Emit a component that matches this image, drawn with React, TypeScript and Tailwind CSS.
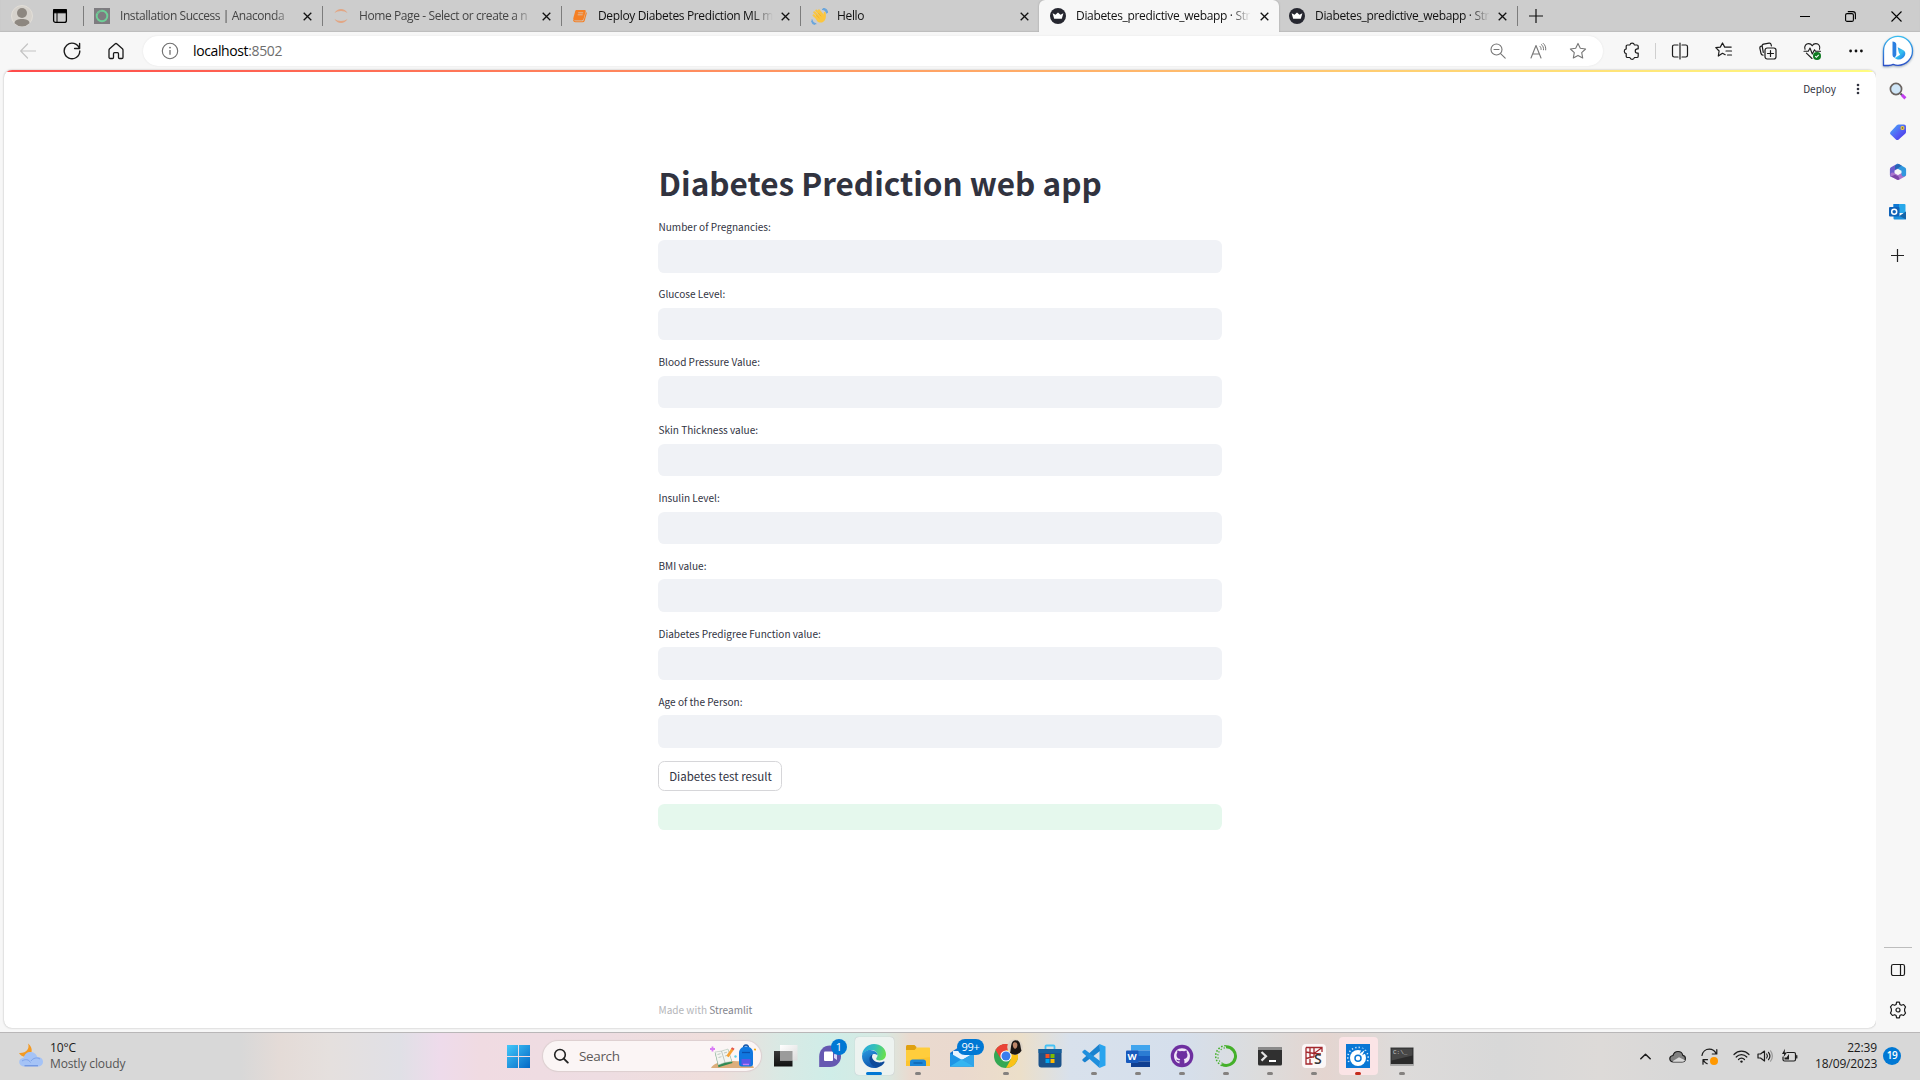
import type { ReactNode } from "react";

const SEGOE = "font-['Open_Sans','Noto_Sans',sans-serif]";
const SOURCE = "font-['Noto_Sans_CJK_SC','Noto_Sans',sans-serif]";

function Svg({ s = 24, vb = 24, className = "", children }: { s?: number; vb?: number; className?: string; children: ReactNode }) {
  return (
    <svg width={s} height={s} viewBox={`0 0 ${vb} ${vb}`} fill="none" className={`shrink-0 ${className}`}>
      {children}
    </svg>
  );
}

/* ---------- tab strip ---------- */

function Crown() {
  return (
    <Svg s={16} vb={16}>
      <circle cx="8" cy="8" r="8" fill="#262730" />
      <path d="M2.600 5.200 5.500 6.800 8 4.400 10.500 6.800l2.900-1.600-1.600 5.600H4.200z" fill="#fff" />
    </Svg>
  );
}

function AnacondaFav() {
  return (
    <Svg s={16} vb={16}>
      <path d="M0 0h16v16H0z" fill="#7e7c80" />
      <circle cx="8" cy="8" r="5.300" stroke="#6fcf97" strokeWidth="1.900" />
      <path d="M3.300 5.600A5.300 5.300 0 0 1 8 2.700" stroke="#7e7c80" strokeWidth=".7" strokeDasharray="1 1" />
    </Svg>
  );
}

function JupyterFav() {
  return (
    <Svg s={16} vb={16}>
      <path d="M1.4 5.2C3 2.300 5.400 1 8 1s5 1.300 6.600 4.200C12.700 3.700 10.500 3 8 3s-4.700.7-6.600 2.200z" fill="#e2a684" />
      <path d="M1.400 10.800C3 13.700 5.400 15 8 15s5-1.300 6.600-4.200C12.700 12.300 10.500 13 8 13s-4.700-.7-6.600-2.200z" fill="#e2a684" />
    </Svg>
  );
}

function BookFav() {
  return (
    <Svg s={16} vb={16}>
      <path d="M4.600 2h8c.8 0 1.300.6 1.100 1.400l-2.200 7.900c-.2.700-.8 1.200-1.500 1.200H3c-1.300 0-2-1-1.700-2.200L3.200 3.200C3.400 2.500 3.900 2 4.600 2z" fill="#f58025" />
      <path d="M6.200 4.800h5M5.700 6.800h5" stroke="#d9c9bd" strokeWidth=".8" />
      <path d="M1.500 11.800c.2 1 .8 1.900 2 1.900h7.100c.8 0 1.400-.5 1.600-1.200l2.200-8" stroke="#f58025" strokeWidth="1.100" />
    </Svg>
  );
}

function WaveFav() {
  return (
    <Svg s={17} vb={17}>
      <path d="M11 1.300c2.500-.2 4.500 1.700 4.500 4.200M12 0.500c3 0 4.500 2 4.500 4.500M1 11.500c.1 2.500 1.600 4 4.300 4.300M.6 13c.4 2 1.400 3 3.400 3.400" stroke="#6ba6dc" strokeWidth="1.300" />
      <path d="m3.300 4.300 5 5M5.300 2.600l5 5.200M8 2.300l4 5.200M2.600 7.300l4.500 4.200" stroke="#fbc63f" strokeWidth="2.100" strokeLinecap="round" />
      <path d="M4 8.800 10 5l2.400 2.400.4-3c.1-1 1.700-1 1.900.3.3 2.500.6 6-1.200 8-2.300 2.600-5.500 2.400-7.500.2z" fill="#fbc63f" />
      <path d="m5 6.800 3.500 3.400M7.200 5.100l3.100 3.200" stroke="#e59c2f" strokeWidth=".5" />
    </Svg>
  );
}

const TABS = [
  { title: "Installation Success | Anaconda", icon: <AnacondaFav />, tone: "text-[#444] tracking-[-0.43px]", box: "w-[239px] pl-[11px]" },
  { title: "Home Page - Select or create a n", icon: <JupyterFav />, tone: "text-[#444] tracking-[-0.4px]", box: "w-[239px] pl-[11px]" },
  { title: "Deploy Diabetes Prediction ML m", icon: <BookFav />, tone: "text-[#111] tracking-[-0.35px]", box: "w-[239px] pl-[11px]" },
  { title: "Hello", icon: <WaveFav />, tone: "text-[#111] tracking-[-0.35px]", box: "w-[239px] pl-[11px]" },
  { title: "Diabetes_predictive_webapp · Str", icon: <Crown />, tone: "text-[#111] tracking-[-0.33px]", box: "w-[240px] pl-[11px]", active: true },
  { title: "Diabetes_predictive_webapp · Str", icon: <Crown />, tone: "text-[#111] tracking-[-0.33px]", box: "w-[238px] pl-[10px]" },
];

function TabStrip() {
  return (
    <div className="flex h-8 items-stretch bg-[#cdcdcd] shadow-[inset_0_-1px_1px_#bdbdbd]">
      <div className="flex w-[83px] items-center pl-[11px]">
        <Svg s={22} vb={22}>
          <circle cx="11" cy="11" r="10.500" fill="#d6d2cc" stroke="#e2ded8" />
          <circle cx="11" cy="8" r="5" fill="#8d8780" />
          <path d="M3.500 18.200c0-3 3.500-4.200 7.500-4.200s7.500 1.200 7.500 4.200A11 11 0 0 1 11 21.500a11 11 0 0 1-7.500-3.300z" fill="#8d8780" />
        </Svg>
        <Svg s={16} vb={16} className="ml-[19px]">
          <rect x="1.600" y="1.600" width="12.800" height="12.800" rx="2" stroke="#000" strokeWidth="1.300" />
          <path d="M1.500 1.500h13v3.300h-13zM5 4.500v10" stroke="#000" strokeWidth="1" fill="#000" />
        </Svg>
      </div>
      {TABS.map((t, i) => (
        <div
          key={i}
          className={`flex items-center pr-[9px] ${t.box} ${
            t.active
              ? "relative z-10 rounded-t-md bg-[#f7f7f7] shadow-[0_0_2px_#9a9a9a] [clip-path:inset(0_-3px_0_-3px)]"
              : "relative"
          }`}
        >
          {!t.active && i !== 5 && <span className="absolute top-[6px] left-0 h-5 w-px bg-[#7c7c7c]" />}
          <span className="flex w-[26px] shrink-0">{t.icon}</span>
          <span
            className={`${SEGOE} ${t.tone} mt-[-1px] w-[175px] text-[12px] leading-4 whitespace-nowrap [mask-image:linear-gradient(90deg,#000_88%,transparent_100%)]`}
          >
            {t.title}
          </span>
          <Svg s={9} vb={9} className="mr-[1px] ml-auto">
            <path d="m.7.7 7.600 7.600M8.300.7.7 8.300" stroke="#111" strokeWidth="1.300" />
          </Svg>
        </div>
      ))}
      <div className="flex flex-1 items-center">
        <span className="h-5 w-px bg-[#7c7c7c]" />
        <Svg s={14} vb={14} className="ml-[11px]">
          <path d="M7 0v14M0 7h14" stroke="#111" strokeWidth="1.200" />
        </Svg>
      </div>
      <div className="flex w-[138px] items-center">
        <span className="flex w-[46px] justify-center">
          <span className="h-px w-[10px] bg-black" />
        </span>
        <span className="flex w-[45px] justify-center">
          <Svg s={11} vb={11}>
            <rect x=".6" y="2.600" width="7.800" height="7.800" rx="1.500" stroke="#000" strokeWidth="1.100" />
            <path d="M2.800.6h5a2.600 2.600 0 0 1 2.600 2.600v5" stroke="#000" strokeWidth="1.100" />
          </Svg>
        </span>
        <span className="flex w-[46px] justify-center">
          <Svg s={11} vb={11}>
            <path d="m.5.5 10 10M10.500.5l-10 10" stroke="#000" strokeWidth="1.100" />
          </Svg>
        </span>
      </div>
    </div>
  );
}

/* ---------- toolbar ---------- */

function BingLogo() {
  return (
    <svg width="32" height="32" viewBox="0 0 32 32" fill="none" className="drop-shadow-[0_1px_1px_#9ab]">
      <defs>
        <linearGradient id="bRing" x1="0" y1="0" x2="0" y2="1">
          <stop offset="0" stopColor="#37bdf0" />
          <stop offset="1" stopColor="#2b50c8" />
        </linearGradient>
        <linearGradient id="bB" x1="0" y1="0" x2="1" y2="1">
          <stop offset="0" stopColor="#2a8be8" />
          <stop offset=".5" stopColor="#35c3f0" />
          <stop offset="1" stopColor="#1c6ae4" />
        </linearGradient>
      </defs>
      <path d="M1.500 30.500V16A14.500 14.500 0 1 1 16 30.300c-1.800 0-3.400-.4-4.800-1-1 .8-3 1.200-5 1.200z" fill="#fff" stroke="url(#bRing)" strokeWidth="1.300" strokeLinejoin="round" />
      <path d="M10.500 6.500c2 .2 3.800 1 3.800 3V20l-1.500 2.800c-1.500-.4-2.300-1.600-2.300-3.300z" fill="#2b7fe0" />
      <path d="M15.700 12.200 21 15c2.200 1.200 2.800 3.200 2 5.200-1.700 4-6.500 5.800-10.200 2.700l5.300-3.200-1.300-2.300z" fill="url(#bB)" />
    </svg>
  );
}

function Toolbar() {
  const k = { stroke: "#1b1b1b", strokeWidth: 1.2, strokeLinecap: "round" as const, strokeLinejoin: "round" as const };
  const g = { ...k, stroke: "#767676", strokeWidth: 1.1 };
  return (
    <div className="flex h-[38px] items-start bg-[#f7f7f7] pt-1">
      <div className="flex h-[30px] w-[143px] items-center pl-[6px]">
        <span className="flex w-11 justify-center">
          <Svg s={16} vb={16}>
            <path d="M15.500 8H.7M7.500 1 .7 8l6.800 7" {...k} stroke="#c4c4c4" />
          </Svg>
        </span>
        <span className="flex w-11 justify-center">
          <Svg s={18} vb={18}>
            <path d="M16.400 6.500A7.800 7.800 0 1 0 16.800 9M16.600 1.500v5h-5" {...k} strokeWidth={1.4} />
          </Svg>
        </span>
        <span className="flex w-11 justify-center">
          <Svg s={18} vb={18}>
            <path d="M2 8.200c0-.6.2-1 .6-1.400L8 1.900c.6-.5 1.400-.5 2 0l5.400 4.900c.4.400.6.8.6 1.400v7c0 .8-.5 1.300-1.200 1.300h-2.300c-.6 0-1-.4-1-1v-3.800c0-.6-.4-1-1-1h-3c-.6 0-1 .4-1 1v3.800c0 .6-.4 1-1 1H3.200c-.7 0-1.200-.5-1.200-1.300z" {...k} strokeWidth={1.3} />
          </Svg>
        </span>
      </div>
      <div className="flex h-[30px] w-[1460px] items-center rounded-full bg-white pr-[5px] pl-[18px] shadow-[0_0_2px_#e2e2e2]">
        <Svg s={18} vb={18}>
          <circle cx="9" cy="9" r="7.700" stroke="#6e6e6e" strokeWidth="1.100" />
          <path d="M9 8v4.800" stroke="#6e6e6e" strokeWidth="1.300" />
          <circle cx="9" cy="5.600" r=".9" fill="#6e6e6e" />
        </Svg>
        <span className={`${SEGOE} ml-[14px] flex-1 text-[14px] leading-5 tracking-[-0.38px] text-black`}>
          localhost<span className="text-[#6e6e6e]">:8502</span>
        </span>
        <span className="flex w-[41px] justify-center">
          <Svg s={16} vb={16}>
            <circle cx="6.500" cy="6.500" r="5.500" {...g} />
            <path d="m10.600 10.600 4.600 4.600M4 6.500h5" {...g} />
          </Svg>
        </span>
        <span className="flex w-[40px] justify-center">
          <Svg s={17} vb={17}>
            <path d="M1 15 6 2.500 11 15M2.700 11h6.600" {...g} />
            <path d="M9.800 3.200c1 .8 1.400 2 1.300 3.300M11.400 1.600c1.700 1.200 2.300 3 2.100 5.200M13.200.4c2 1.600 2.800 3.800 2.500 6.500" {...g} strokeWidth={1} />
          </Svg>
        </span>
        <span className="flex w-[40px] justify-center">
          <Svg s={18} vb={18}>
            <path d="m9 1.400 2.300 4.900 5.300.7-3.900 3.700 1 5.300L9 13.400 4.300 16l1-5.300L1.400 7l5.300-.7z" {...g} />
          </Svg>
        </span>
      </div>
      <div className="flex h-[30px] items-center pl-[7px]">
        <span className="flex w-11 justify-center">
          <Svg s={18} vb={18}>
            <path d="M3.200 4.300c0-.7.500-1.300 1.300-1.300h2.400a2.300 2.300 0 0 1 4.500 0h2.500c.8 0 1.300.6 1.300 1.300v2.500h-.8a2.100 2.100 0 0 0 0 4.300h.8v3.100c0 .8-.5 1.300-1.300 1.300h-2.500a2.300 2.300 0 0 1-4.500 0H4.500c-.8 0-1.300-.5-1.300-1.300v-2.600a2.400 2.400 0 0 1 0-4.700z" {...k} />
          </Svg>
        </span>
        <span className="ml-px h-4 w-px bg-[#cfcfcf]" />
        <span className="flex w-[47px] justify-center">
          <Svg s={18} vb={18}>
            <path d="M7 3H3.200C2.200 3 1.500 3.700 1.500 4.700v8.600c0 1 .7 1.700 1.700 1.700H7M11 3h3.800c1 0 1.700.7 1.700 1.700v8.600c0 1-.7 1.700-1.700 1.700H11M9 1v16" {...k} />
          </Svg>
        </span>
        <span className="flex w-[42px] justify-center">
          <Svg s={18} vb={18}>
            <path d="M10.200 12.700 7.500 11.300 3.300 14l.8-5L.8 5.700l4.500-.6 2.200-4.100 2.200 4.100h6.500M11 9h5.500M12.500 13h4" {...k} />
          </Svg>
        </span>
        <span className="flex w-[45px] justify-center">
          <Svg s={18} vb={18}>
            <rect x="6" y="6" width="11" height="11" rx="2.200" {...k} />
            <path d="M11.500 8.500v6M8.500 11.500h6M4 13.200c-1 0-1.600-.5-1.900-1.400L.9 6.300c-.2-1 .3-1.900 1.300-2.200M4.300 10.500 3.200 4.200c-.2-1 .4-1.900 1.400-2.100l5.400-1c1-.2 1.900.4 2.100 1.400l.3 1.500" {...k} />
          </Svg>
        </span>
        <span className="flex w-11 justify-center">
          <Svg s={19} vb={19}>
            <path d="M2 7.300C.9 3.800 3.200 1.600 5.600 1.600c1.600 0 2.900.9 3.600 2.200.7-1.300 2-2.200 3.700-2.200 2.700 0 4.700 2.400 3.600 5.700M1 9.200h4.300L7 6l2.300 6 2.200-4.300 1 1.500h5M3.400 11.200l5.600 5.300" {...k} strokeWidth={1.1} />
            <circle cx="14" cy="14" r="4" fill="#0f7b22" />
            <path d="m12.200 14.200 1.200 1.100 2.300-2.500" stroke="#fff" strokeWidth="1.100" />
          </Svg>
        </span>
        <span className="flex w-11 justify-center">
          <Svg s={14} vb={14}>
            <g fill="#111">
              <circle cx="1.600" cy="7" r="1.400" />
              <circle cx="7" cy="7" r="1.400" />
              <circle cx="12.400" cy="7" r="1.400" />
            </g>
          </Svg>
        </span>
        <span className="ml-[4px] flex w-8">
          <BingLogo />
        </span>
      </div>
    </div>
  );
}

/* ---------- edge sidebar ---------- */

function Sidebar() {
  const k = { stroke: "#1b1b1b", strokeWidth: 1.2, strokeLinejoin: "round" as const };
  return (
    <div className="flex w-11 flex-col items-center bg-[#f7f7f7] pt-[1px] pr-px">
      <span className="flex h-10 items-center">
        <Svg s={18} vb={18}>
          <path d="m11.500 11.500 1.800 1.800" stroke="#555" strokeWidth="2" />
          <path d="m12.800 12.800 3.600 3.600" stroke="#c23ff0" strokeWidth="3" />
          <circle cx="7" cy="7" r="5.600" fill="#cfe6f8" stroke="#6b6460" strokeWidth="1.700" />
        </Svg>
      </span>
      <span className="flex h-[41px] items-center">
        <svg width="18" height="18" viewBox="0 0 18 18">
          <defs>
            <linearGradient id="tagG" x1="0" y1="0" x2="1" y2="1">
              <stop offset="0" stopColor="#46b1f8" />
              <stop offset=".55" stopColor="#5560f5" />
              <stop offset="1" stopColor="#4a2fe0" />
            </linearGradient>
          </defs>
          <path d="M9.500 1.500h5.500c1 0 2 .8 2 2V9c0 .6-.2 1-.6 1.400L9.700 16.500c-.8.800-2 .800-2.800 0l-5.200-5c-.8-.8-.8-2 0-2.800l6.300-6.600c.4-.4.900-.6 1.500-.6z" fill="url(#tagG)" />
          <circle cx="13.500" cy="5" r="1.500" fill="#7a6a50" stroke="#f6d33c" strokeWidth="1.100" />
        </svg>
      </span>
      <span className="flex h-[39px] items-center">
        <Svg s={18} vb={18}>
          <g strokeWidth="4.600" strokeLinejoin="round" strokeLinecap="round">
            <path d="M3.200 12V6.300L8.500 3.200" stroke="#6c5ccc" />
            <path d="M14.800 11.500 9 14.800 3.600 11.800" stroke="#a873cd" />
            <path d="M9 3.200l5.800 3.200v4.800" stroke="#3098de" />
          </g>
          <path d="M6 2.500 9.500.9l3.300 1.600L9 5.200 6 6.500z" fill="#2765b5" />
          <path d="m2 13.500 4-1.700 3.500 1.700 1 2.500-1.500 1z" fill="#7a45a6" />
        </Svg>
      </span>
      <span className="flex h-10 items-center">
        <Svg s={17} vb={17}>
          <path d="M4.500 1h11a1 1 0 0 1 1 1v8h-12z" fill="#28a8ea" />
          <path d="M4.500 1h5.500v4.500H4.500z" fill="#0f78d4" />
          <path d="M4.500 8.500 11 13l6-4.500v7a1 1 0 0 1-1 1H5.500a1 1 0 0 1-1-1z" fill="#1a8fdc" />
          <path d="m17 8.500-6.500 4.500 6.500 3.500z" fill="#1564a8" />
          <rect x="0" y="4" width="10.500" height="9.500" rx="1" fill="#0f62b8" />
          <circle cx="5.200" cy="8.700" r="2.500" stroke="#fff" strokeWidth="1.500" />
        </Svg>
      </span>
      <span className="flex h-[48px] items-center">
        <Svg s={13} vb={13}>
          <path d="M6.500 0v13M0 6.500h13" stroke="#222" strokeWidth="1.200" />
        </Svg>
      </span>
      <span className="mt-auto h-px w-7 bg-[#bdbdbd]" />
      <Svg s={16} vb={16} className="mt-[14px]">
        <rect x="1.500" y="2.500" width="13" height="11" rx="1.800" {...k} />
        <path d="M10.500 2.500v11" {...k} />
      </Svg>
      <Svg s={18} vb={18} className="mt-[23px] mb-[13px]">
        <path
          d="M7.600 1.200h2.800l.5 2.300 1.400.8 2.300-.8 1.900 2.400-.9 2v2.200l.9 2-1.900 2.400-2.300-.8-1.400.8-.5 2.300H7.600l-.5-2.300-1.400-.8-2.300.8-1.900-2.400.9-2V7.900l-.9-2 1.900-2.400 2.300.8 1.400-.8z"
          {...k}
        />
        <circle cx="9" cy="9" r="2" {...k} />
      </Svg>
    </div>
  );
}

/* ---------- streamlit page ---------- */

const FIELDS = [
  "Number of Pregnancies:",
  "Glucose Level:",
  "Blood Pressure Value:",
  "Skin Thickness value:",
  "Insulin Level:",
  "BMI value:",
  "Diabetes Predigree Function value:",
  "Age of the Person:",
];

function StreamlitPage() {
  return (
    <div className={`${SOURCE} ml-1 flex h-[958px] w-[1872px] flex-col overflow-hidden rounded-lg bg-white text-[#31333f] shadow-[0_0_2px_#aaa]`}>
      <div className="h-[2px] shrink-0 bg-[linear-gradient(90deg,#ff4b4b,#fffd80)]" />
      <div className="flex h-[34px] shrink-0 items-center justify-end pr-[16px]">
        <span className="text-[10.050px] leading-4">Deploy</span>
        <svg width="4" height="12" viewBox="0 0 4 12" className="ml-[20px]" fill="#31333f">
          <circle cx="2" cy="2" r="1.300" />
          <circle cx="2" cy="6" r="1.300" />
          <circle cx="2" cy="10" r="1.300" />
        </svg>
      </div>
      <div className="ml-[654px] flex w-[564px] flex-1 flex-col">
        <h1 className="mt-[53px] h-[46px] pl-[0.600px] text-[31.5px] leading-[46px] font-bold whitespace-nowrap">Diabetes Prediction web app</h1>
        <div className="mt-[12.500px] flex flex-col gap-[12.800px]">
          {FIELDS.map((f) => (
            <label key={f} className="flex h-[55.100px] flex-col text-[10.050px]">
              <span className="h-[22.500px] pl-[0.500px] leading-[18px]">{f}</span>
              <span className="h-[32.600px] rounded-[6.400px] bg-[#f0f2f6]" />
            </label>
          ))}
        </div>
        <button className="mt-[13px] h-[30px] w-[124px] rounded-[6.400px] border border-[#d6d6d9] pl-px text-[11.500px] leading-[28px] whitespace-nowrap">
          Diabetes test result
        </button>
        <div className="mt-[13px] h-[26px] rounded-[6.400px] bg-[#e5f8ed]" />
        <footer className="mt-auto mb-[9px] pl-[0.500px] text-[10.050px] leading-[18px] text-[#b5b6ba]">
          Made with <span className="text-[#83848c]">Streamlit</span>
        </footer>
      </div>
    </div>
  );
}

/* ---------- taskbar ---------- */

function Slot({ children, dot = true, tile = "", mark = "" }: { children: ReactNode; dot?: boolean; tile?: string; mark?: string }) {
  return (
    <div className="relative flex h-full w-11 items-center justify-center">
      <div className={`flex h-[38px] w-[39px] items-center justify-center rounded ${tile}`}>{children}</div>
      {dot && <span className={`absolute bottom-[4px] h-[3px] rounded-full ${mark || "w-[6px] bg-[#84817f]"}`} />}
    </div>
  );
}

function Apps() {
  return (
    <div className="flex h-full">
      <Slot dot={false}>
        <svg width="24" height="24" viewBox="0 0 24 24">
          <defs>
            <linearGradient id="tvA" x1="0" y1="0" x2="0" y2="1">
              <stop offset="0" stopColor="#3a3a3a" />
              <stop offset="1" stopColor="#111" />
            </linearGradient>
            <linearGradient id="tvB" x1="0" y1="0" x2="1" y2="1">
              <stop offset="0" stopColor="#fff" />
              <stop offset="1" stopColor="#dcdcdc" />
            </linearGradient>
          </defs>
          <path d="M0 7h18.500v15.500H0z" fill="url(#tvA)" />
          <path d="M6 1h17.500v15.500H6z" fill="url(#tvB)" />
          <path d="M6 7h12.500v9.500H6z" fill="#9b9b9b" />
        </svg>
      </Slot>
      <Slot dot={false}>
        <span className="relative">
          <Svg s={24}>
            <path d="M12 1.500c6.500 0 11 4.800 11 10.700S18.500 23 12 23H1.200V12.500C1.200 6.200 5.700 1.500 12 1.500z" fill="#6558b1" />
            <rect x="6" y="7.500" width="9" height="9.500" rx="1" fill="#fff" />
            <path d="m16 10.500 3-2v7.500l-3-2z" fill="#dcd7f5" />
          </Svg>
          <span className={`${SEGOE} absolute top-[-5px] left-[13px] h-4 w-4 rounded-full bg-[#0078d4] text-center text-[11px] leading-4 text-white`}>1</span>
        </span>
      </Slot>
      <Slot tile="bg-[#edf3f0] shadow-[0_0_1px_#aab]" mark="w-4 bg-[#0078d4]">
        <svg width="24" height="24" viewBox="0 0 24 24">
          <defs>
            <linearGradient id="eTop" x1="0" y1=".3" x2="1" y2=".5">
              <stop offset="0" stopColor="#2aa7e0" />
              <stop offset=".5" stopColor="#35c1b8" />
              <stop offset="1" stopColor="#69e04b" />
            </linearGradient>
            <linearGradient id="eLeft" x1="0" y1="0" x2=".4" y2="1">
              <stop offset="0" stopColor="#2b9be0" />
              <stop offset="1" stopColor="#1058b0" />
            </linearGradient>
          </defs>
          <path d="M0 12C0 5.300 5.400 0 12 0s12 4.800 12 10.300c0 3.800-2.900 6.200-6.200 6.200-2.500 0-4-.8-3.600-2 .5-1 1.300-1.800 1.300-3.300C15.500 8 12.500 6 9 6c-4.500 0-8 2.500-9 6z" fill="url(#eTop)" />
          <path d="M0 12c.7-3.800 4.300-6.200 8.300-6 3.700.2 7.200 2 7.200 5.200 0 0-1.500-1.700-4-1.200C9 10.500 8 12.500 8 14.500c0 4.500 3.500 8 8 9-1.200.4-2.500.5-4 .5C5.400 24 0 18.600 0 12z" fill="url(#eLeft)" />
          <path d="M11 10.200c-2.800.8-3.800 3-3.500 5.800.5 4.500 4.500 7.500 8.300 7.500 3-1 5.500-3 6.700-5.300.3-.6-.3-1-.9-.7-1 .5-2.400.9-4 .9-4 0-7.600-2.700-7.600-5.900 0-1 .4-1.800 1-2.300z" fill="#0c4a9a" />
        </svg>
      </Slot>
      <Slot>
        <Svg s={24}>
          <path d="M0 2.500C0 1.700.6 1 1.500 1h7L10.500 3v3H0z" fill="#e0a010" />
          <path d="M0 6h8.500L11 3.500h12c.6 0 1 .4 1 1V22H0z" fill="#ffcd3c" />
          <path d="M0 22h24v-9L0 17z" fill="#fbbc22" opacity=".5" />
          <path d="M4 22v-4c0-1.500 1-2.500 2.500-2.500h11c1.500 0 2.500 1 2.500 2.500v4z" fill="#1c87d8" />
          <path d="M7.500 19h9" stroke="#0c5fa8" strokeWidth="1.200" />
        </Svg>
      </Slot>
      <Slot dot={false}>
        <span className="relative">
          <Svg s={24}>
            <path d="M0 9 12 1l12 8v13.500H0z" fill="#1573cf" />
            <path d="M3 7h18v8l-9 4-9-4z" fill="#e8f4ff" />
            <path d="m0 9 12 7 12-7v13.500H0z" fill="#1e95e6" />
            <path d="M0 22.500 12 15l12 7.500z" fill="#35b5f1" />
            <path d="m24 9-12 7 12 6.500z" fill="#2fa4e9" />
          </Svg>
          <span className={`${SEGOE} absolute top-[-5px] left-[7px] h-4 w-[27px] rounded-full bg-[#0078d4] text-center text-[11px] leading-[15px] tracking-[-0.3px] text-white`}>99+</span>
        </span>
      </Slot>
      <Slot>
        <span className="relative">
          <Svg s={24}>
            <circle cx="12" cy="12" r="12" fill="#34a853" />
            <path d="M12 12 1.600 6A12 12 0 0 1 22.400 6z" fill="#ea4335" />
            <path d="M12 0a12 12 0 0 0-10.400 6L7 15l5-9h10.400A12 12 0 0 0 12 0z" fill="#ea4335" />
            <path d="M12 6h10.400A12 12 0 0 1 12 24l5-9z" fill="#fbc116" />
            <circle cx="12" cy="12" r="5.600" fill="#fff" />
            <circle cx="12" cy="12" r="4.500" fill="#3b7ded" />
          </Svg>
          <Svg s={16} vb={16} className="absolute top-[-5px] left-[13px]">
            <circle cx="8" cy="8" r="7.800" fill="#ddd3c6" />
            <path d="M3 13.800C4.500 10 3 1.200 8.500 1.200s4.500 6 6 10.500A8 8 0 0 1 8 15.800a8 8 0 0 1-5-2z" fill="#1b1614" />
            <path d="M5.800 5.200c.6-2.700 4.400-2.500 4.600.6.1 2.400-1.300 4-2.300 4s-2.500-2-2.300-4.600z" fill="#bd8669" />
          </Svg>
        </span>
      </Slot>
      <Slot dot={false}>
        <Svg s={24}>
          <path d="M7.500 6V2.500c0-.6.400-1 1-1h7c.6 0 1 .4 1 1V6" stroke="#45c2f5" strokeWidth="1.800" />
          <path d="M.5 5h23v15.500a3 3 0 0 1-3 3h-17a3 3 0 0 1-3-3z" fill="#1b5289" />
          <path d="M.5 5h23v4H.5z" fill="#17609c" />
          <path d="M7.500 10h4v4h-4z" fill="#f25022" />
          <path d="M12.500 10h4v4h-4z" fill="#7fba00" />
          <path d="M7.500 15h4v4h-4z" fill="#00a4ef" />
          <path d="M12.500 15h4v4h-4z" fill="#ffb900" />
        </Svg>
      </Slot>
      <Slot>
        <Svg s={24}>
          <path d="m17.500 0 6 2.500v19l-6 2.500z" fill="#29a4ee" />
          <path d="M17.500 0 .6 15.200c-.5.500-.5 1 0 1.500l1.500 1.300c.4.400.9.400 1.400.1L18 7z" fill="#1a82cf" />
          <path d="M17.500 24 .6 8.800c-.5-.5-.5-1 0-1.500L2.100 6c.4-.4.9-.4 1.400-.1L18 17z" fill="#1f8fdd" />
        </Svg>
      </Slot>
      <Slot>
        <span className="relative">
          <Svg s={24}>
            <path d="M5 1h19v5.500H5z" fill="#41a5ee" />
            <path d="M5 6.500h19V12H5z" fill="#2b7cd3" />
            <path d="M5 12h19v5.500H5z" fill="#185abd" />
            <path d="M5 17.500h19V23H5z" fill="#103f91" />
            <rect x="0" y="6.500" width="12.500" height="12.500" rx="1" fill="#185abd" />
          </Svg>
          <span className={`${SEGOE} absolute top-[6px] left-0 w-[12px] text-center text-[9.500px] leading-[13px] font-bold text-white`}>W</span>
        </span>
      </Slot>
      <Slot>
        <Svg s={24}>
          <circle cx="12" cy="12" r="11.300" fill="#6e2fa0" />
          <path d="M12 4.200c-4.400 0-8 3.400-8 7.800 0 3.600 2.300 6.500 5.500 7.500v-2.200c-2 .4-2.700-.7-3.300-1.900 1.500-.2 1.500 1.100 3.500.8.100-.6.300-1 .6-1.200-2-.3-3.800-1.200-3.800-4 0-1 .3-1.700.8-2.300-.2-.6-.2-1.500.1-2.300.8 0 1.600.4 2.300.9a8 8 0 0 1 4.600 0c.7-.5 1.500-.9 2.300-.9.300.8.300 1.700.1 2.300.5.600.8 1.400.8 2.300 0 2.800-1.700 3.700-3.800 4 .4.400.7 1 .7 2v2.500a7.900 7.900 0 0 0 5.600-7.500c0-4.400-3.600-7.800-8-7.800z" fill="#efe6f6" />
        </Svg>
      </Slot>
      <Slot>
        <Svg s={24}>
          <path d="M12 2.800a9.300 9.300 0 1 1-4 17.600" stroke="#44b02a" strokeWidth="3" />
          <path d="M8 21.500A10.300 10.300 0 0 1 12 1.700" stroke="#44b02a" strokeWidth="1.500" strokeDasharray="1.600 1.700" />
          <path d="M8.500 19.400A8.200 8.200 0 0 1 12 3.800" stroke="#44b02a" strokeWidth="1.200" strokeDasharray="1.200 2" />
        </Svg>
      </Slot>
      <Slot>
        <Svg s={24}>
          <rect x="0" y="3" width="24" height="18.500" rx="1.500" fill="#303030" />
          <path d="M0 4.500C0 3.700.7 3 1.500 3h21c.8 0 1.500.7 1.500 1.500V6H0z" fill="#8a8a8a" />
          <path d="m3.500 8 4.500 4.300-4.500 4.300" stroke="#e4e4e4" strokeWidth="2.200" />
          <path d="M11 17h7" stroke="#fff" strokeWidth="2" />
        </Svg>
      </Slot>
      <Slot>
        <span className="relative">
          <Svg s={24}>
            <rect width="24" height="24" rx="4" fill="#fbf7f7" />
            <path d="M4 3.500h16v4.500M4 3.500v16.500h6.500M8 3.500v16.500M4 8l8 1.500M4 14.500l6-1.500M19.500 4 12 9.500V13M12 3.500v6l7 .5M8 13l4 0" stroke="#a4272c" strokeWidth="1.300" />
          </Svg>
          <span className={`${SEGOE} absolute top-[7px] left-[12px] text-[14px] leading-4 font-semibold text-[#333]`}>S</span>
        </span>
      </Slot>
      <Slot tile="bg-[#fbe4e6]" mark="w-[6px] bg-[#c42b1c]">
        <Svg s={24}>
          <path d="M0 0h24v24H0z" fill="#0a77d5" />
          <path d="M2.800 18A10.200 10.200 0 1 1 21.200 18" stroke="#d5e9fb" strokeWidth="1.600" strokeDasharray="1.300 2.200" />
          <circle cx="12" cy="14" r="8" fill="#fff" />
          <path d="M12.500 13 16 4l5.500 4.500z" fill="#0a77d5" />
          <path d="M10 12.500 18.800 6l-5 10z" fill="#fff" />
          <circle cx="12" cy="14.300" r="3" fill="#fff" stroke="#0a77d5" strokeWidth="1.500" />
        </Svg>
      </Slot>
      <Slot>
        <span className="relative">
          <Svg s={24}>
            <rect x=".5" y="3.500" width="23" height="17.500" rx=".8" fill="#2b2b2b" stroke="#8d8d8d" />
            <path d="M1.500 4.500h21v7l-21 5z" fill="#474747" />
            <path d="M0 20h24v1.800H0z" fill="#a8a8a8" />
          </Svg>
          <span className="absolute top-[5px] left-[3px] font-['Liberation_Mono',monospace] text-[6px] leading-[8px] text-[#c8c8c8]">C:\_</span>
        </span>
      </Slot>
    </div>
  );
}

function SearchArt() {
  return (
    <svg width="46" height="25" viewBox="0 0 46 25" fill="none" className="shrink-0">
      <path d="M1 24c2-4 8-7 22-7s20 3 21 7z" fill="#dcae7c" />
      <path d="m5 9 13-3.500 4.500 13.500-14 4.200z" fill="#2f8a52" />
      <path d="m5 8 6.500-1 6.500-2 3.800 12.500-6.800 1-6.800 2.500z" fill="#f3f5f0" stroke="#a9bcae" strokeWidth=".5" />
      <path d="m11.500 7 3.500 11.500M7.500 10.500l3-.8M8.500 13.500l3-.8M14 9l3-.8M15 12l3-.8" stroke="#9aa8a2" strokeWidth=".6" />
      <path d="m17.500 12.500 5.200-7.500" stroke="#f7a233" strokeWidth="2.800" />
      <path d="m22.300 5.500 1-1.500" stroke="#e5534b" strokeWidth="3" />
      <path d="M2.500 2.500v5M0 5h5" stroke="#d97bf5" strokeWidth="1.800" />
      <circle cx="25.500" cy="12.500" r="1.200" fill="#5bd2e8" />
      <circle cx="45" cy="5.500" r="1.100" fill="#f5a50a" />
      <path d="M33.500 4c0-4 5-4 5 0" stroke="#1453a8" strokeWidth="1.400" />
      <path d="M29 9c0-4 3-6.500 7-6.500S43 5 43 9v11c0 1.500-1 2.500-2.500 2.500h-9c-1.500 0-2.500-1-2.500-2.500z" fill="#1077e0" />
      <path d="M31.500 15h9v6h-9z" fill="#5a57e8" />
      <path d="M32 8.500h8" stroke="#0a4fae" strokeWidth="1.300" />
      <path d="M33 20.500h6" stroke="#c47cf5" strokeWidth="1.500" />
    </svg>
  );
}

function Taskbar() {
  const k = { stroke: "#1c1c1c", strokeWidth: 1.2, strokeLinecap: "round" as const, strokeLinejoin: "round" as const };
  return (
    <div
      className={`${SEGOE} flex h-12 items-center border-t border-[#b9b7b8] bg-[linear-gradient(90deg,#d8d8d8_0px,#d8d8d8_240px,#e4dbd7_280px,#e5e0de_330px,#e0e0e6_400px,#eedbeb_440px,#f0dbe2_480px,#eedde2_600px,#efdedb_720px,#d9e9e4_780px,#cfede8_830px,#d8e9e2_885px,#eadacf_910px,#ead9ce_960px,#ecdfc9_1020px,#d8e1ec_1070px,#d5dfec_1180px,#dcdcdc_1260px,#e4d5d0_1325px,#dddbda_1400px,#d8d8d8_1500px,#dddad8_1600px,#d8d8d8_1680px)] pb-px`}
    >
      <div className="flex h-full w-[507px] items-center pl-[19px]">
        <Svg s={24} className="mt-[-2px]">
          <path d="M9 .5c2 5-1.500 10-9 9.500 1.500 3 5 4.500 8.500 3.500 4.500-1.300 6.500-8.500.5-13z" fill="#f39a24" />
          <path d="M6 23.500c-3.500 0-5.800-1.800-5.800-4.500 0-2.500 2-4 4.500-4.300C5.500 11 8.200 9 11.500 9c3.500 0 6 2 6.800 5 3.500 0 5.700 2 5.700 4.700 0 2.800-2.200 4.800-5.500 4.800z" fill="#a5c3f6" />
          <path d="M3 18c3-2 6.500-2 8.500 1.500M12 18c2-3 6-4 9-2" stroke="#7da2ea" strokeWidth="1" />
          <path d="M5.500 22.800h13.500" stroke="#5f88dc" strokeWidth="1" />
        </Svg>
        <div className="ml-[7px] text-[12px] leading-4 tracking-[-0.12px]">
          <div className="text-[#1a1a1a]">10°C</div>
          <div className="text-[#555]">Mostly cloudy</div>
        </div>
      </div>
      <svg width="23" height="23" viewBox="0 0 23 23" className="shrink-0">
        <defs>
          <linearGradient id="winG" x1="0" y1="0" x2="23" y2="23" gradientUnits="userSpaceOnUse">
            <stop offset="0" stopColor="#42c8fa" />
            <stop offset="1" stopColor="#0467c5" />
          </linearGradient>
        </defs>
        <path d="M0 0h11v11H0zM12 0h11v11H12zM0 12h11v11H0zM12 12h11v11H12z" fill="url(#winG)" />
      </svg>
      <div className="ml-[13px] flex h-[30px] w-[218px] items-center rounded-full bg-[#fbf5f5] pr-[5px] pl-[10px] shadow-[0_0_1px_1px_#dccfd0]">
        <Svg s={16} vb={16}>
          <circle cx="7" cy="6.800" r="5.300" stroke="#222" strokeWidth="1.600" />
          <path d="m10.800 10.600 4 4" stroke="#222" strokeWidth="1.900" strokeLinecap="round" />
        </Svg>
        <span className="ml-[10px] flex-1 text-[13.500px] leading-5 tracking-[-0.35px] text-[#5e5a5a]">Search</span>
        <SearchArt />
      </div>
      <div className="ml-[3px] h-full">
        <Apps />
      </div>
      <div className="ml-auto flex h-full items-center">
        <Svg s={11} vb={11} className="mr-[18px]">
          <path d="m.8 7.800 4.700-4.600 4.700 4.600" {...k} strokeWidth={1.5} />
        </Svg>
        <Svg s={17} vb={17} className="mr-[15px]">
          <path d="M4.300 14C2.300 14 .8 12.600.8 10.800S2.300 7.700 4 7.500C4.700 5 6.600 3.500 9 3.500c2.500 0 4.300 1.600 4.800 3.800 1.600.3 2.600 1.600 2.600 3.200 0 2-1.500 3.500-3.500 3.500z" fill="#808080" {...k} />
          <path d="M3.500 13.200 10 9.300l6 3c-.7 1-1.600 1.500-3 1.500H4.500z" fill="#d8d8d8" />
        </Svg>
        <Svg s={17} vb={17} className="mr-[15px]">
          <path d="M1 7.500C1.600 4 4.500 1.200 8.300 1.200c3 0 5.400 1.500 6.700 4.300M15.800 1.500v4.500h-4.500M2 16.200v-4.500h4.500M2.300 12c.9 1.800 2.200 3 3.900 3.700" {...k} />
          <circle cx="13" cy="13" r="4" fill="#ff9800" />
        </Svg>
        <Svg s={17} vb={17} className="mr-[7px]">
          <path d="M1 6.500c4.300-4.400 10.700-4.400 15 0M3.200 9c3-3.100 7.600-3.100 10.600 0M5.500 11.500c1.700-1.800 4.300-1.800 6 0" {...k} />
          <circle cx="8.500" cy="13.600" r="1.200" fill="#1c1c1c" />
        </Svg>
        <Svg s={16} vb={16} className="mr-[8px]">
          <path d="M1 6v4h2.500L7.500 13V3L3.500 6z" {...k} />
          <path d="M9.700 6c.9 1.200.9 2.800 0 4M11.500 4.300c1.700 2.200 1.700 5.200 0 7.400" {...k} />
          <path d="M13.500 2.800c2.500 3 2.500 7.400 0 10.400" {...k} stroke="#999" />
        </Svg>
        <Svg s={17} vb={17}>
          <path d="M6 4.500h7c1 0 1.500.6 1.500 1.500v5.500c0 1-.6 1.500-1.500 1.500H3.500c-1 0-1.500-.6-1.500-1.500V9M15.800 7.500v2.500" {...k} />
          <path d="M3.500 9.500h2L8 6v5.500H3.500z" fill="#1c1c1c" />
          <path d="M4 .8 1 6h2.200L2.500 9.300 6 4.500H3.700z" fill="#1c1c1c" />
        </Svg>
        <div className="ml-[17px] w-[62px] text-right text-[12px] leading-4 tracking-[-0.15px] whitespace-nowrap text-[#1a1a1a]">
          <div>22:39</div>
          <div>18/09/2023</div>
        </div>
        <span className="mr-[19px] ml-[6px] h-[18px] w-[18px] rounded-full bg-[#0078d4] text-center text-[10px] leading-[17px] font-semibold tracking-[-0.4px] text-white">19</span>
      </div>
    </div>
  );
}

export default function App() {
  return (
    <div className="flex h-[1080px] w-[1920px] flex-col overflow-hidden bg-[#f7f7f7]">
      <TabStrip />
      <Toolbar />
      <div className="flex h-[962px]">
        <StreamlitPage />
        <Sidebar />
      </div>
      <Taskbar />
    </div>
  );
}
